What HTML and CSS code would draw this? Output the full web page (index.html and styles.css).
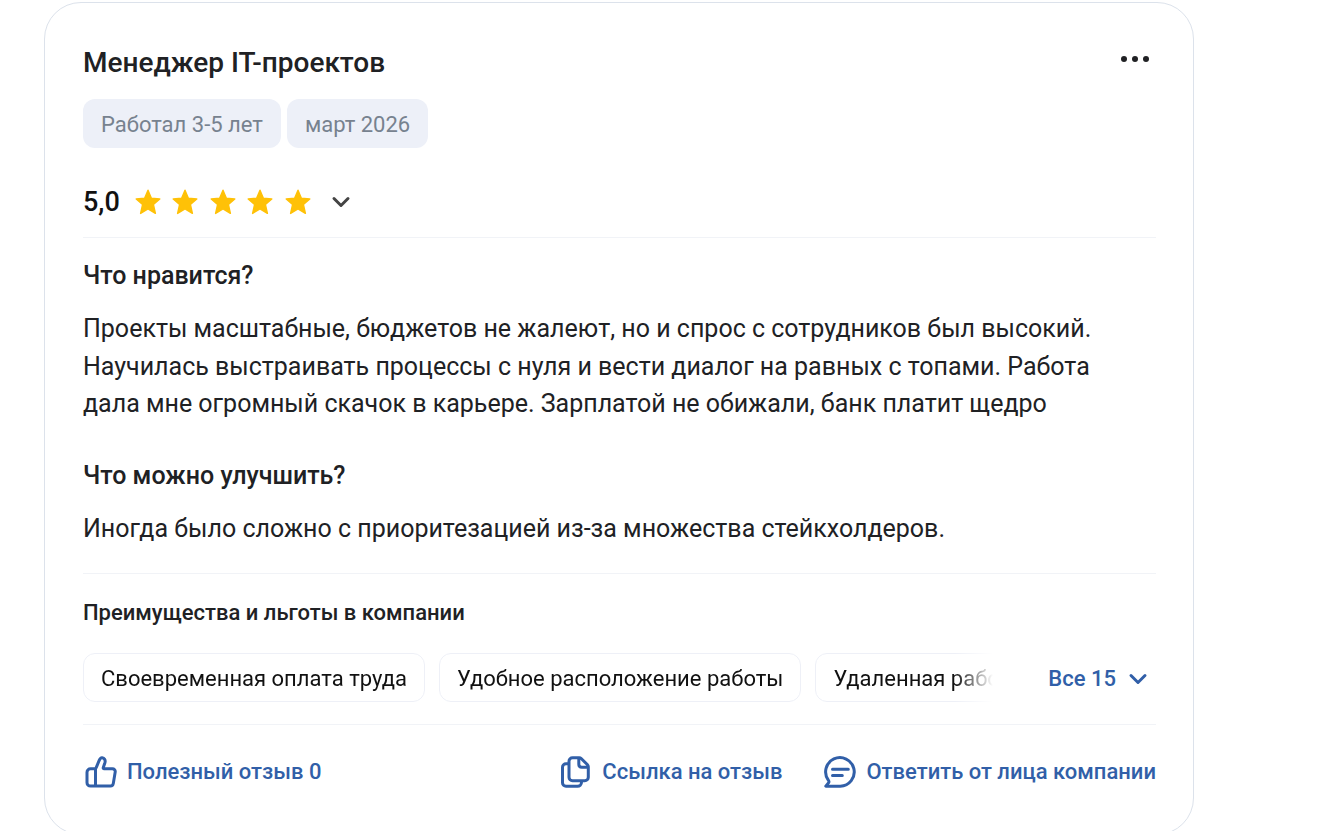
FILE: index.html
```html
<!DOCTYPE html>
<html lang="ru">
<head>
<meta charset="utf-8">
<meta name="viewport" content="width=device-width, initial-scale=1">
<title>Отзыв сотрудника</title>
<link rel="stylesheet" href="styles.css">
</head>
<body>
<svg class="sprite" aria-hidden="true">
  <symbol id="star" viewBox="0 0 26 26"><path d="M13 1.200l3.400 8 8.400.7-6.400 5.600 2 8.900L13 19.800l-7.400 4.600 2-8.900L1.200 9.900l8.400-.7z" stroke="#ffc107" stroke-width="1.400" stroke-linejoin="round"/></symbol>
  <symbol id="chevron" viewBox="0 0 20 14"><path d="M3 3.500l7 7 7-7" fill="none" stroke="currentColor" stroke-width="3" stroke-linecap="round" stroke-linejoin="round"/></symbol>
</svg>
<article class="card">
  <header class="header">
    <h1 class="title">Менеджер IT-проектов</h1>
    <button class="more" type="button" aria-label="Действия">
      <svg width="30" height="8" viewBox="0 0 30 8" aria-hidden="true"><circle cx="4" cy="4" r="3"/><circle cx="15" cy="4" r="3"/><circle cx="26" cy="4" r="3"/></svg>
    </button>
  </header>
  <ul class="tags">
    <li class="tag">Работал 3-5 лет</li>
    <li class="tag">март 2026</li>
  </ul>
  <div class="rating">
    <span class="score">5,0</span>
    <div class="stars" role="img" aria-label="5 из 5">
      <svg class="star"><use href="#star"/></svg>
      <svg class="star"><use href="#star"/></svg>
      <svg class="star"><use href="#star"/></svg>
      <svg class="star"><use href="#star"/></svg>
      <svg class="star"><use href="#star"/></svg>
    </div>
    <button class="toggle" type="button" aria-label="Подробнее об оценке"><svg class="chevron"><use href="#chevron"/></svg></button>
  </div>
  <div class="review">
    <section>
      <h2 class="question">Что нравится?</h2>
      <p class="answer">Проекты масштабные, бюджетов не жалеют, но и спрос с сотрудников был высокий. Научилась выстраивать процессы с нуля и вести диалог на равных с топами. Работа дала мне огромный скачок в карьере. Зарплатой не обижали, банк платит щедро</p>
    </section>
    <section>
      <h2 class="question">Что можно улучшить?</h2>
      <p class="answer">Иногда было сложно с приоритезацией из-за множества стейкхолдеров.</p>
    </section>
  </div>
  <section class="benefits">
    <h2 class="subtitle">Преимущества и льготы в компании</h2>
    <div class="benefits-row">
      <ul class="chips">
        <li class="chip">Своевременная оплата труда</li>
        <li class="chip">Удобное расположение работы</li>
        <li class="chip">Удаленная работа</li>
      </ul>
      <button class="all" type="button">Все 15 <svg class="chevron"><use href="#chevron"/></svg></button>
    </div>
  </section>
  <footer class="actions">
    <button class="action action-first" type="button">
      <svg class="icon" viewBox="0 0 32 32" aria-hidden="true"><path d="M10.500 13v17M5.500 12.800h4.300c.7 0 1.100-.5 1.400-1.200l3-7.200c.8-1.900 1.600-2.900 2.900-2.700 2.400.4 3.500 2.500 2.900 4.700l-1.700 5c-.3.900.1 1.400.9 1.400h8.200c1.800 0 3.100 1.500 2.800 3.200l-1.900 11.400c-.2 1.600-1.300 2.700-2.900 2.700H5.500c-1.900 0-3.500-1.500-3.500-3.400V16.200c0-1.900 1.600-3.400 3.500-3.400z"/></svg>
      Полезный отзыв 0
    </button>
    <button class="action" type="button">
      <svg class="icon" viewBox="0 0 32 32" aria-hidden="true"><path d="M12.500 1.700h6.700c.8 0 1.500.3 2 .8l6.300 6.300c.6.600.8 1.200.8 2v10.400a3.500 3.500 0 0 1-3.500 3.500H12.500A3.500 3.500 0 0 1 9 21.200v-16a3.500 3.500 0 0 1 3.500-3.500zM18.800 2v6.300c0 1.700 1.200 2.900 2.900 2.900h6.300M8.500 7.700H6a3.500 3.500 0 0 0-3.500 3.500v15.600A3.500 3.500 0 0 0 6 30.300h11.500a4 4 0 0 0 4-4v-1.500"/></svg>
      Ссылка на отзыв
    </button>
    <button class="action" type="button">
      <svg class="icon" viewBox="0 0 32 32" aria-hidden="true"><path d="M1.800 30.200h14.500A14.300 14.300 0 1 0 4.500 24.500c.5.700.6 1.400.2 2.100zM8.500 13.200h15.800M8.500 19.400h9.800"/></svg>
      Ответить от лица компании
    </button>
  </footer>
</article>
</body>
</html>
```
FILE: styles.css
```css
* { box-sizing: border-box; }

body {
  margin: 0;
  height: 100vh;
  overflow: hidden;
  padding: 2px 129px 0 44px;
  background: #fff;
  color: #202124;
  font-family: Roboto, "Liberation Sans", sans-serif;
}

h1, h2, p, ul { margin: 0; padding: 0; }
ul { list-style: none; }

button {
  border: 0;
  padding: 0;
  background: none;
  color: inherit;
  font: inherit;
  cursor: pointer;
}

.sprite { position: absolute; width: 0; height: 0; }

.card {
  border: 1px solid #dce2eb;
  border-radius: 37px;
  padding: 41px 37px 46px 38px;
}

.header {
  display: flex;
  justify-content: space-between;
  align-items: flex-start;
}

.title { font-size: 28px; line-height: 38px; font-weight: 500; }
.more { display: flex; padding: 11px 6px 11px; }
.more svg { fill: #202124; }

.tags { display: flex; gap: 6px; margin-top: 17px; }
.tag {
  padding: 11px 18px 8px;
  border-radius: 12px;
  background: #edf0f8;
  color: #77828f;
  font-size: 22px;
  line-height: 30px;
}

.rating {
  display: flex;
  align-items: center;
  margin-top: 36px;
  padding-bottom: 17px;
  border-bottom: 1px solid #f1f3f7;
}
.score { font-size: 27px; line-height: 36px; font-weight: 500; color: #111; }
.stars {
  display: flex;
  justify-content: space-between;
  width: 176px;
  margin-left: 15px;
}
.star { width: 26px; height: 26px; fill: #ffc107; }
.toggle { display: flex; margin-left: 20px; color: #444; }
.chevron { width: 20px; height: 14px; }

.review {
  display: grid;
  gap: 35px;
  padding: 20px 0 26px;
  border-bottom: 1px solid #f1f3f7;
}
.question { font-size: 25px; line-height: 36px; font-weight: 500; }
.answer {
  margin-top: 16px;
  padding-right: 24px;
  font-size: 25px;
  line-height: 1.5;
}

.benefits { padding: 24px 0 22px; border-bottom: 1px solid #f1f3f7; }
.subtitle { font-size: 22px; line-height: 30px; font-weight: 500; }
.benefits-row {
  display: flex;
  justify-content: space-between;
  align-items: center;
  gap: 55px;
  margin-top: 25px;
}
.chips {
  display: flex;
  flex: 1;
  gap: 14px;
  min-width: 0;
  overflow: hidden;
  mask-image: linear-gradient(to right, #000 calc(100% - 38px), transparent);
}
.chip {
  flex: none;
  padding: 11px 17px 8px;
  border: 1px solid #eef0f7;
  border-radius: 12px;
  color: #111;
  font-size: 22px;
  line-height: 28px;
}
.all {
  display: flex;
  align-items: center;
  gap: 12px;
  padding: 3px 8px 0 0;
  color: #315fa8;
  font-size: 22px;
  line-height: 30px;
  font-weight: 500;
}

.actions {
  display: flex;
  align-items: center;
  gap: 42px;
  padding-top: 31px;
}
.action {
  display: flex;
  align-items: center;
  gap: 10px;
  color: #315fa8;
  font-size: 22px;
  line-height: 30px;
  font-weight: 500;
}
.action-first { margin: 0 auto 0 2px; }
.icon {
  width: 32px;
  height: 32px;
  fill: none;
  stroke: currentColor;
  stroke-width: 3;
  stroke-linecap: round;
  stroke-linejoin: round;
}
```
